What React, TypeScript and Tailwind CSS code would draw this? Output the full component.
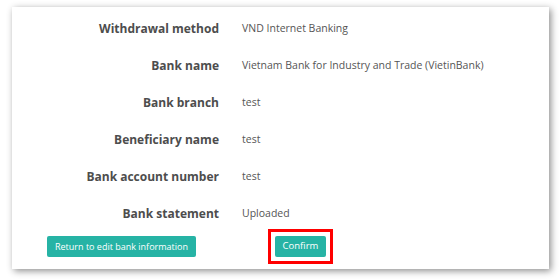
import React from "react";

const rows: [string, string][] = [
  ["Withdrawal method", "VND Internet Banking"],
  ["Bank name", "Vietnam Bank for Industry and Trade (VietinBank)"],
  ["Bank branch", "test"],
  ["Beneficiary name", "test"],
  ["Bank account number", "test"],
  ["Bank statement", "Uploaded"],
];

const App: React.FC = () => {
  return (
    <div className="w-[560px] h-[280px] bg-white overflow-hidden pl-[12px] pt-[7px]">
      <div className="w-[537px] h-[262px] bg-white shadow-[2px_2px_7px_rgba(0,0,0,0.45)] pt-[3px]">
        {rows.map(([label, value]) => (
          <div key={label} className="flex items-center h-[37px]">
            <div className="w-[207px] text-right text-[12px] font-bold text-[#4d4d4d] font-['Open_Sans',sans-serif]">
              {label}
            </div>
            <div className="ml-[23px] text-[10.5px] text-[#555] font-['Open_Sans',sans-serif]">
              {value}
            </div>
          </div>
        ))}
        <div className="flex items-center mt-[4px] h-[21px]">
          <button className="ml-[35px] w-[149px] h-[21px] rounded-[2px] bg-[#26b3a5] text-white text-[9px] font-medium font-['Open_Sans',sans-serif]">
            Return to edit bank information
          </button>
          <div className="ml-[72px] -mt-[1px] border-[3px] border-[#ff0000] p-[4px]">
            <button className="block w-[51px] h-[21px] rounded-[2px] bg-[#26b3a5] text-white text-[9.5px] font-medium font-['Open_Sans',sans-serif]">
              Confirm
            </button>
          </div>
        </div>
      </div>
    </div>
  );
};

export default App;
